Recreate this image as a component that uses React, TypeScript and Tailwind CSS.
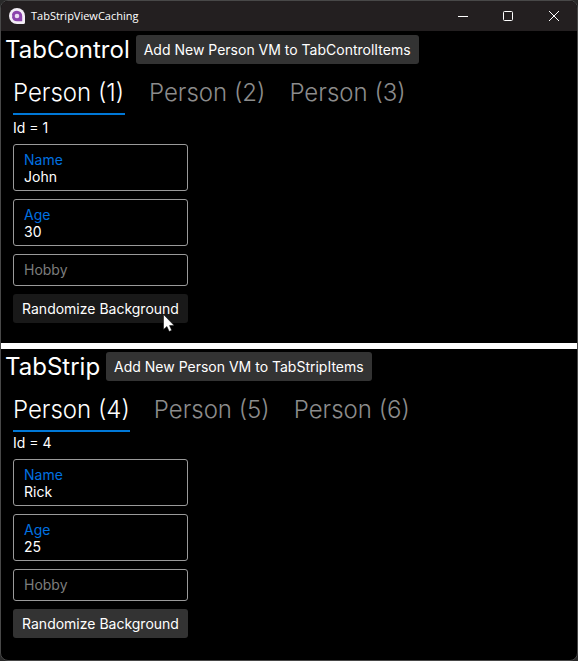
import { useState } from "react";

type Person = { id: number; name: string; age: string };

const controlPeople: Person[] = [
  { id: 1, name: "John", age: "30" },
  { id: 2, name: "", age: "" },
  { id: 3, name: "", age: "" },
];

const stripPeople: Person[] = [
  { id: 4, name: "Rick", age: "25" },
  { id: 5, name: "", age: "" },
  { id: 6, name: "", age: "" },
];

function AppLogo() {
  return (
    <svg width="16" height="16" viewBox="0 0 16 16" aria-hidden="true">
      <path d="M8 0a8 8 0 1 0 0 16h6.400A1.600 1.600 0 0 0 16 14.400V8A8 8 0 0 0 8 0Z" fill="#f3eef6" />
      <path
        d="M8 2.800A5.200 5.200 0 0 0 2.900 7a1.300 1.300 0 0 1 0 2A5.200 5.200 0 0 0 8 13.200h5.200V8A5.200 5.200 0 0 0 8 2.800Z"
        fill="#8b44ac"
      />
      <circle cx="8" cy="8" r="2.300" fill="#eadcf1" />
    </svg>
  );
}

function TitleBar() {
  return (
    <header className="flex h-[30px] shrink-0 items-center bg-[#231f20] pl-2">
      <AppLogo />
      <h1 className="ml-[6px] flex-1 font-['Open_Sans','Noto_Sans',sans-serif] text-[11px] leading-4 text-white">
        TabStripViewCaching
      </h1>
      <button type="button" aria-label="Minimize" className="flex h-full w-[45px] items-center justify-center">
        <svg width="10" height="10" viewBox="0 0 10 10">
          <path d="M0 5.500h10" stroke="#fff" />
        </svg>
      </button>
      <button type="button" aria-label="Maximize" className="flex h-full w-[45px] items-center justify-center">
        <svg width="10" height="10" viewBox="0 0 10 10">
          <rect x="0.500" y="0.500" width="9" height="9" rx="1" fill="none" stroke="#fff" />
        </svg>
      </button>
      <button type="button" aria-label="Close" className="flex h-full w-[47px] items-center justify-center">
        <svg width="10" height="10" viewBox="0 0 10 10">
          <path d="M0 0l10 10M10 0L0 10" stroke="#fff" />
        </svg>
      </button>
    </header>
  );
}

function Field({ id, label, value }: { id: string; label: string; value: string }) {
  const [text, setText] = useState(value);
  return (
    <div className={`grid rounded-[3px] border border-[#9a9a9a] px-[10px] pt-[6px] ${text ? "pb-1" : "pb-[6px]"}`}>
      <label
        htmlFor={id}
        className={
          text
            ? "h-[17px] leading-[18px] text-[#0071e0]"
            : "col-start-1 row-start-1 leading-[18px] text-[#7d7d7d]"
        }
      >
        {label}
      </label>
      <input
        id={id}
        value={text}
        onChange={(e) => setText(e.target.value)}
        className={`h-[18px] w-full bg-transparent leading-[18px] outline-none ${text ? "" : "col-start-1 row-start-1"}`}
      />
    </div>
  );
}

function PersonView({ person, pressed }: { person: Person; pressed?: boolean }) {
  return (
    <div className="w-[187px] pl-3">
      <p className="mb-[5px] leading-[22px]">Id = {person.id}</p>
      <div className="flex flex-col gap-2">
        <Field id={`name-${person.id}`} label="Name" value={person.name} />
        <Field id={`age-${person.id}`} label="Age" value={person.age} />
        <Field id={`hobby-${person.id}`} label="Hobby" value="" />
        <div className="relative">
          <button
            type="button"
            className={`h-[29px] w-full rounded-[3px] whitespace-nowrap ${pressed ? "bg-[#191919]" : "bg-[#333333]"}`}
          >
            Randomize Background
          </button>
          {pressed && (
            <svg className="absolute top-5 right-[13px]" width="12" height="18" viewBox="0 0 12 18" aria-hidden="true">
              <path
                d="M0.500 0.500v15l3.400-3 2.300 5 2.500-1.200-2.200-4.700h4.700Z"
                fill="#fff"
                stroke="#000"
                strokeWidth="0.500"
              />
            </svg>
          )}
        </div>
      </div>
    </div>
  );
}

function Section({ title, action, people, pressed }: {
  title: string;
  action: string;
  people: Person[];
  pressed?: boolean;
}) {
  const [selected, setSelected] = useState(people[0].id);
  const person = people.find((p) => p.id === selected) ?? people[0];
  return (
    <>
      <div className="flex items-center gap-[6px] pl-1">
        <h2 className="text-[24px] leading-[29px]">{title}</h2>
        <button type="button" className="h-[29px] rounded-[3px] bg-[#333333] px-2 whitespace-nowrap">
          {action}
        </button>
      </div>
      <div role="tablist" className="mt-[3px] flex gap-6 pl-3">
        {people.map((p) => (
          <button
            key={p.id}
            type="button"
            role="tab"
            aria-selected={p.id === selected}
            onClick={() => setSelected(p.id)}
            className={`h-12 min-w-28 border-b-2 pt-[6px] text-left text-[24px] font-light whitespace-nowrap ${
              p.id === selected ? "border-[#0078d7] text-white" : "border-transparent text-[#8c8c8c]"
            }`}
          >
            Person ({p.id})
          </button>
        ))}
      </div>
      <div className={pressed ? "pt-[2px]" : ""}>
        <PersonView key={person.id} person={person} pressed={pressed} />
      </div>
    </>
  );
}

export default function App() {
  return (
    <div className="min-h-screen bg-[#292929] font-['Inter','Liberation_Sans',sans-serif] text-[14px] text-white">
      <div className="flex min-h-screen flex-col overflow-hidden rounded-lg border border-[#484848] bg-black">
        <TitleBar />
        <main className="flex flex-1 flex-col">
          <section className="border-b-6 border-white pt-1 pb-5">
            <Section
              title="TabControl"
              action="Add New Person VM to TabControlItems"
              people={controlPeople}
              pressed
            />
          </section>
          <section className="pt-[3px]">
            <Section title="TabStrip" action="Add New Person VM to TabStripItems" people={stripPeople} />
          </section>
        </main>
      </div>
    </div>
  );
}
